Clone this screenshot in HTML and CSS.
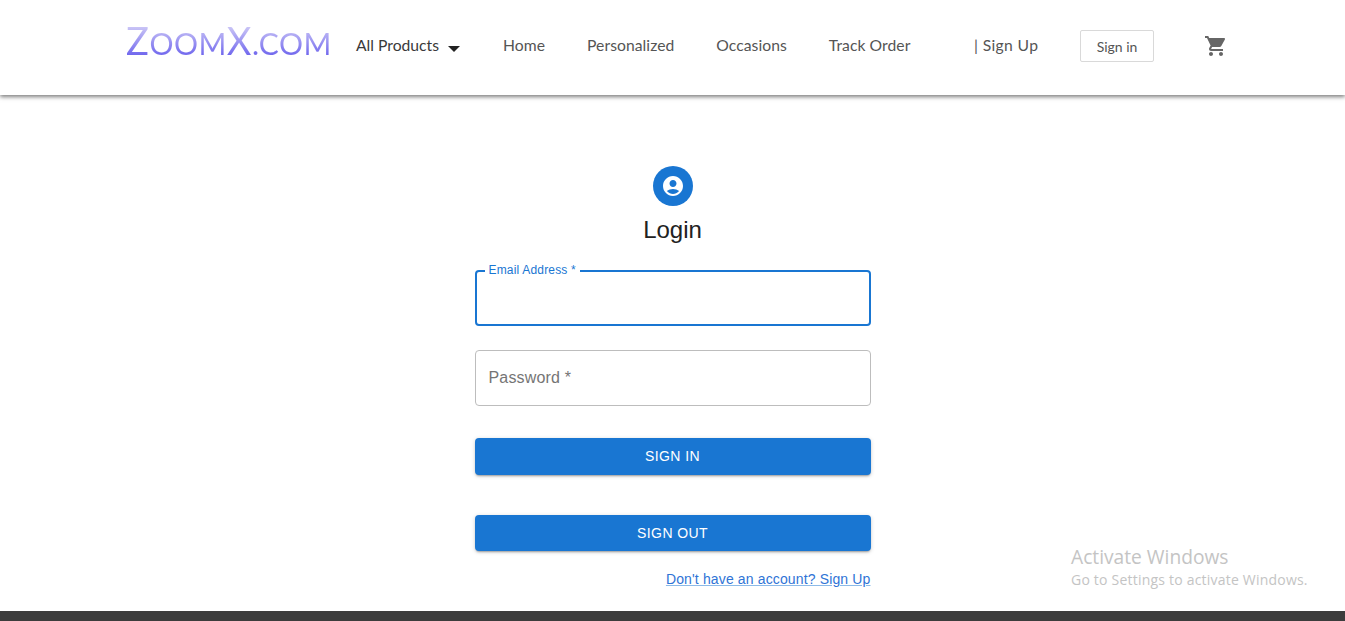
FILE: index.html
```html
<!DOCTYPE html>
<html lang="en">
<head>
<meta charset="utf-8">
<title>ZoomX.com Login</title>
<link rel="stylesheet" href="styles.css">
</head>
<body>
<div class="page">
  <header class="topbar">
    <a class="logo" href="#"><span class="logo-big">Z</span>OOM<span class="logo-big">X</span>.COM</a>
    <nav class="nav">
      <a class="nav-link products" href="#">All Products <svg class="caret" width="12" height="6" viewBox="0 0 12 6"><path d="M0 0h12L6 6z" fill="#222"/></svg></a>
      <a class="nav-link" href="#">Home</a>
      <a class="nav-link" href="#">Personalized</a>
      <a class="nav-link" href="#">Occasions</a>
      <a class="nav-link" href="#">Track Order</a>
    </nav>
    <a class="nav-link signup" href="#">| Sign Up</a>
    <a class="signin-btn" href="#">Sign in</a>
    <a class="cart" href="#" aria-label="Cart">
      <svg width="24" height="24" viewBox="0 0 24 24"><path fill="#666" d="M7 18c-1.1 0-1.99.9-1.99 2S5.900 22 7 22s2-.9 2-2-.9-2-2-2zM1 2v2h2l3.600 7.590-1.350 2.450c-.16.28-.25.61-.25.96 0 1.100.9 2 2 2h12v-2H7.420c-.14 0-.25-.11-.25-.25l.03-.12.9-1.630h7.450c.75 0 1.410-.41 1.750-1.030l3.580-6.490c.08-.14.12-.31.12-.48 0-.55-.45-1-1-1H5.210l-.94-2H1zm16 16c-1.100 0-1.990.9-1.990 2s.89 2 1.990 2 2-.9 2-2-.9-2-2-2z"/></svg>
    </a>
  </header>

  <main class="main">
    <div class="form-wrap">
      <div class="avatar">
        <svg width="24" height="24" viewBox="0 0 24 24"><path fill="#fff" d="M12 2C6.480 2 2 6.480 2 12s4.480 10 10 10 10-4.480 10-10S17.520 2 12 2zm0 4c1.930 0 3.500 1.570 3.500 3.500S13.930 13 12 13s-3.500-1.570-3.500-3.500S10.070 6 12 6zm0 14c-2.030 0-4.430-.82-6.140-2.880C7.550 15.800 9.680 15 12 15s4.450.8 6.140 2.120C16.430 19.180 14.030 20 12 20z"/></svg>
      </div>
      <h1 class="title">Login</h1>
      <form class="form">
        <div class="field field-focus">
          <label class="field-label" for="email">Email Address *</label>
          <input class="field-input" id="email" type="email">
        </div>
        <div class="field field-idle">
          <input class="field-input" id="password" type="password" placeholder="Password *">
        </div>
        <button class="btn btn-in" type="button">SIGN IN</button>
        <button class="btn btn-out" type="button">SIGN OUT</button>
      </form>
      <a class="account-link" href="#">Don't have an account? Sign Up</a>
    </div>
  </main>

  <footer class="footer"></footer>

  <div class="watermark">
    <div class="wm-title">Activate Windows</div>
    <div class="wm-sub">Go to Settings to activate Windows.</div>
  </div>
</div>
</body>
</html>
```
FILE: styles.css
```css
* { box-sizing: border-box; }
html, body { margin: 0; padding: 0; height: 100%; overflow: hidden; }
body { background: #fff; font-family: "Liberation Sans", Arial, sans-serif; color: #222; }
a { text-decoration: none; }

.page { position: relative; height: 621px; display: flex; flex-direction: column; }

.topbar {
  height: 95px;
  flex: none;
  display: flex;
  align-items: center;
  padding-left: 126px;
  background: #fff;
  box-shadow: 0 2px 4px rgba(0,0,0,.5);
  position: relative;
}
.logo {
  width: 230px;
  flex: none;
  font-family: Lato, sans-serif;
  font-weight: 400;
  font-size: 30px;
  line-height: 40px;
  letter-spacing: .5px;
  white-space: nowrap;
  margin-top: -12px;
  background: linear-gradient(#cbc6f6 15%, #736aee 80%);
  -webkit-background-clip: text;
  background-clip: text;
  color: transparent;
}
.logo-big { font-size: 38px; }

.nav { display: flex; align-items: center; gap: 42px; width: 618px; flex: none; margin-top: -6px; }
.nav-link {
  font-family: Lato, sans-serif;
  font-size: 15.7px;
  line-height: 22px;
  letter-spacing: .05px;
  color: #555;
  white-space: nowrap;
}
.products { color: #3a3a3a; letter-spacing: 0; margin-right: 1px; }
.caret { margin-left: 5px; vertical-align: -1px; }
.signup { width: 106px; flex: none; margin-top: -6px; letter-spacing: .35px; }

.signin-btn {
  width: 74px;
  height: 32px;
  flex: none;
  margin-top: -3px;
  display: flex;
  align-items: center;
  justify-content: center;
  border: 1px solid #d9d9d9;
  border-radius: 2px;
  font-family: Lato, sans-serif;
  font-size: 14px;
  color: #555;
}
.cart { margin-left: 50px; display: flex; margin-top: -3px; }

.main { flex: 1; display: flex; justify-content: center; min-height: 0; }
.form-wrap { width: 396px; padding-top: 71px; display: flex; flex-direction: column; align-items: center; }
.avatar {
  width: 40px; height: 40px; border-radius: 50%;
  background: #1976d2;
  display: flex; align-items: center; justify-content: center;
}
.title { margin: 6px 0 0; font-size: 24px; font-weight: 400; line-height: 36px; color: #222; }

.form { width: 100%; margin-top: 22px; display: flex; flex-direction: column; }
.field { position: relative; height: 56px; border-radius: 4px; }
.field-focus { border: 2px solid #1976d2; }
.field-idle { border: 1px solid #bdbdbd; margin-top: 24px; }
.field-label {
  position: absolute;
  left: 8px;
  top: -9px;
  padding: 0 4px;
  background: #fff;
  font-size: 12px;
  line-height: 14px;
  letter-spacing: .18px;
  color: #1976d2;
}
.field-input {
  width: 100%; height: 100%;
  border: 0; outline: 0; background: transparent;
  padding: 0 13px;
  font-family: inherit;
  font-size: 16px;
}
.field-input::placeholder { color: #757575; opacity: 1; letter-spacing: .16px; }

.btn {
  width: 100%;
  border: 0;
  border-radius: 4px;
  background: #1976d2;
  color: #fff;
  font-family: inherit;
  font-size: 14px;
  letter-spacing: .4px;
  box-shadow: 0 2px 2px -1px rgba(0,0,0,.3), 0 1px 4px rgba(0,0,0,.18);
}
.btn-in { height: 37px; margin-top: 32px; padding: 0 0 2px; }
.btn-out { height: 36px; margin-top: 40px; padding: 0; }

.account-link {
  margin-top: 20px;
  align-self: flex-end;
  font-size: 14px;
  line-height: 16px;
  letter-spacing: .14px;
  color: #2f74d6;
  text-decoration: underline;
  text-decoration-color: rgba(25,118,210,.5);
}

.footer { height: 10px; flex: none; background: #3c3c3c; }

.watermark { position: absolute; left: 1071px; top: 545px; font-family: "Open Sans", sans-serif; color: #c4c4c4; pointer-events: none; }
.wm-title { font-size: 19.2px; line-height: 23px; }
.wm-sub { font-size: 14px; line-height: 20px; letter-spacing: .21px; margin-top: 2px; }
```
